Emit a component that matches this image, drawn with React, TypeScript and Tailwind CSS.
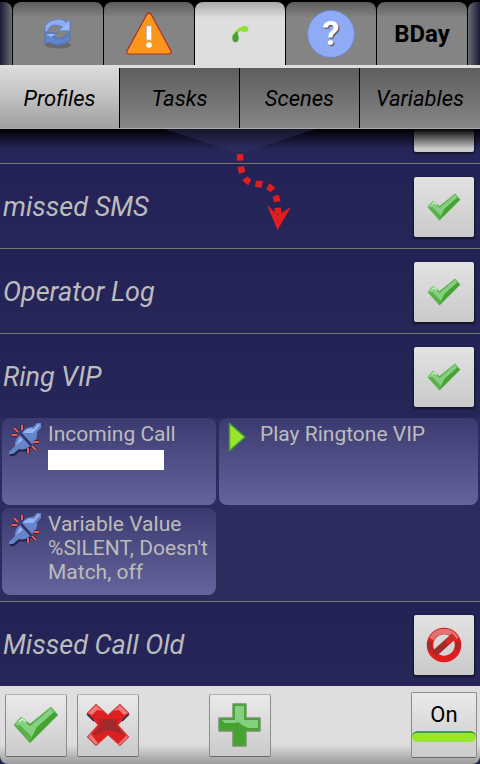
import type { ReactNode } from 'react';

const profiles = ['missed SMS', 'Operator Log', 'Ring VIP'];
const sections = ['Profiles', 'Tasks', 'Scenes', 'Variables'];

function CheckIcon({ className }: { className: string }) {
  return (
    <svg viewBox="0 0 46 38" className={className} aria-hidden="true">
      <path d="M1 19 L8 11 L17 18 L38 1 L45 9 L17 37 Z" fill="#46a330" stroke="#7fbf78" strokeWidth="1" strokeLinejoin="round" />
      <path d="M2 18 L8 12 L17 20 L38 2 L41 6 L24 21 L17 34 L12 27 Z" fill="#84cf80" />
      <path d="M2 20 L17 36 L18 30 L7 19 Z" fill="#5ab14a" />
      <path d="M6 16 L9 13 L13 16" fill="none" stroke="#d3f0cf" strokeWidth="1.5" />
    </svg>
  );
}

function CrossIcon() {
  return (
    <svg viewBox="0 0 44 44" className="size-11" aria-hidden="true">
      <path d="M1 10 L10 1 L22 12 L34 1 L43 10 L32 22 L43 34 L34 43 L22 32 L10 43 L1 34 L12 22 Z" fill="#df1f1f" stroke="#c76060" strokeWidth="1" strokeLinejoin="round" />
      <path d="M13 16 H32 L30 22 L38 32 Q31 30 27 28 H18 Q12 31 6 33 L15 22 Z" fill="#a32a2a" />
      <path d="M2 10 L10 2 L16 8 L11 7 L6 12 Z M28 8 L34 2 L42 10 L38 12 L33 7 Z" fill="#ef7777" />
      <path d="M2 34 L5 31 L12 40 L10 42 Z M32 41 L41 32 L42 34 L34 42 Z" fill="#e87a7a" />
      <path d="M1 11 L8 18 M43 11 L36 18" stroke="#1b1f38" strokeWidth="1.5" />
    </svg>
  );
}

function PlusIcon() {
  return (
    <svg viewBox="0 0 44 44" className="size-11" aria-hidden="true">
      <path d="M15 1 H28 V15 H42 V28 H28 V43 H15 V28 H1 V15 H15 Z" fill="#46a330" stroke="#75906f" strokeWidth="1.5" strokeLinejoin="round" />
      <path d="M17 3 H26 V17 H40 V25 H30 L24 22 Q21 18 17 20 H7 L4 17 H17 Z" fill="#84cf80" />
    </svg>
  );
}

function BlockedIcon() {
  return (
    <svg viewBox="0 0 36 36" className="size-9" aria-hidden="true">
      <circle cx="18" cy="18" r="14" fill="none" stroke="#de1d1d" strokeWidth="6.5" />
      <path d="M5.500 12 A14 14 0 0 1 30.500 12" fill="none" stroke="#e07474" strokeWidth="5" />
      <path d="M4 15 V23 M32 15 V23" stroke="#a52a2a" strokeWidth="4.5" />
      <path d="M8 27 L28 9" stroke="#a52a2a" strokeWidth="6.5" />
      <path d="M20 16 L28 9" stroke="#d42a2a" strokeWidth="5" />
    </svg>
  );
}

function RefreshIcon() {
  return (
    <svg viewBox="0 0 28 30" className="h-[30px] w-7" aria-hidden="true">
      <ellipse cx="14" cy="26" rx="13" ry="3.5" fill="#6a6a6c" />
      <path d="M1 13 V6 Q7 0 14 0 Q19 0 22 3 L26 0 V12 H15 L18 8 Q11 4 6 8 L3 13 Z" fill="#8fabf0" stroke="#5c7fc4" />
      <path d="M26 14 V21 Q20 26 14 26 Q9 26 5 23 L1 25 V14 H13 L9 18 Q16 21 21 18 L24 14 Z" fill="#5f84ce" stroke="#5372b4" />
      <path d="M2 15 H12 L7 18 Z M16 11 H25 V4 Z" fill="#9bb8fa" />
    </svg>
  );
}

function WarningIcon() {
  return (
    <svg viewBox="0 0 46 43" className="h-[43px] w-[46px]" aria-hidden="true">
      <path d="M21 2 Q23 0 25 2 L45 39 Q46 42 43 42 H3 Q0 42 1 39 Z" fill="#fa961c" stroke="#a53030" strokeWidth="1.2" />
      <rect x="20.5" y="14" width="5" height="14" fill="#fff" stroke="#b6b8cc" strokeWidth="0.8" />
      <circle cx="23" cy="33" r="2.8" fill="#fff" />
    </svg>
  );
}

function PhoneIcon() {
  return (
    <svg viewBox="0 0 18 18" className="size-[18px]" aria-hidden="true">
      <path d="M4 12 C4 8 7 4 13 3.500" fill="none" stroke="#8ee235" strokeWidth="3.5" />
      <path d="M5 11 Q5 9 6 7.500" fill="none" stroke="#46a330" strokeWidth="3" />
      <ellipse cx="4.500" cy="13" rx="3.200" ry="4.200" fill="#46a330" />
      <ellipse cx="13.500" cy="4" rx="4" ry="3" fill="#8ee235" />
    </svg>
  );
}

function PlugIcon() {
  return (
    <svg viewBox="0 0 34 34" className="size-[34px] shrink-0" aria-hidden="true">
      <path d="M2 31 L9 25 Q7 19 12 15 L23 26 Q18 31 12 29 L6 34 H2 Z" fill="#1e2347" />
      <path d="M1 30 L7 24 Q6 18 12 13 L22 24 Q17 29 11 27 L5 32 H1 Z" fill="#6585c8" />
      <path d="M14 11 Q18 4 25 5 L29 1 H33 V6 L29 10 Q30 17 24 22 Z" fill="#6585c8" />
      <path d="M8 23 L12 15 L15 18 Z M15 11 Q19 5 26 7 L30 2 L32 3 L25 11 Z" fill="#94b4f7" />
      <path d="M13 12 L24 24" stroke="#2b315f" strokeWidth="1.5" />
      <g stroke="#321d3b" strokeWidth="3.5">
        <path d="M6 6 L10 10 M14 3 V8 M4 13 H9 M26 20 H31 M20 26 V31 M24 24 L28 28" />
      </g>
      <g stroke="#e6605d" strokeWidth="2">
        <path d="M6 6 L10 10 M14 3 V8 M4 13 H9 M26 20 H31 M20 26 V31 M24 24 L28 28" />
      </g>
    </svg>
  );
}

function ProjectTab({ label, active, children }: { label: string; active?: boolean; children: ReactNode }) {
  return (
    <button
      aria-label={label}
      className={
        active
          ? 'flex h-[63px] flex-1 items-center justify-center rounded-t-lg bg-linear-to-b from-[#a9a9a9] via-[#dedede] via-25% to-[#dedede]'
          : 'flex h-[63px] flex-1 items-center justify-center rounded-t-lg bg-linear-to-b from-[#5c5c5c] via-[#848484] via-25% to-[#848484]'
      }
    >
      {children}
    </button>
  );
}

function ProfileRow({ name, children }: { name: string; children: ReactNode }) {
  return (
    <div className="flex h-[84px] shrink-0 items-center justify-between bg-linear-to-b from-[#232256] to-[#272659] pt-0.5 pr-1.5 pl-[3px]">
      <span className="text-[27px] leading-8 italic">{name}</span>
      <button
        aria-label={`Toggle ${name}`}
        className="flex size-[60px] items-center justify-center rounded-xs bg-linear-to-b from-[#e2e2e2] to-[#cacaca] shadow-[0_1px_2px_1px_#15152f]"
      >
        {children}
      </button>
    </div>
  );
}

function Card({ icon, children }: { icon: ReactNode; children: ReactNode }) {
  return (
    <div className="flex h-[87px] items-start rounded-lg bg-linear-to-b from-[#3b3a70] to-[#66649c] pt-1 text-[21px] leading-6">
      {icon}
      {children}
    </div>
  );
}

function BarButton({ label, children }: { label: string; children: ReactNode }) {
  return (
    <button
      aria-label={label}
      className="flex h-[63px] w-[62px] items-center justify-center rounded-xs border border-t-[#b0b0b0] border-r-[#8c8c8c] border-b-[#666] border-l-[#8c8c8c] bg-linear-to-b from-[#eaeaea] to-[#cbcbcb]"
    >
      {children}
    </button>
  );
}

export default function App() {
  return (
    <div className="flex min-h-screen flex-col bg-[#232256] font-[Roboto,sans-serif] text-[#bcbcbc]">
      <nav className="flex gap-px overflow-hidden border-b-[3px] border-[#dedede] bg-black pt-0.5 text-black">
        <div className="h-[63px] w-3 rounded-tr-lg bg-linear-to-r from-[#1b1b38] to-[#6e6e6e]" />
        <ProjectTab label="Sync"><RefreshIcon /></ProjectTab>
        <ProjectTab label="Alerts"><WarningIcon /></ProjectTab>
        <ProjectTab label="Calls" active><PhoneIcon /></ProjectTab>
        <ProjectTab label="Help">
          <span className="flex size-12 items-center justify-center rounded-full border border-[#7088c8] bg-[#90abf5] text-[34px] font-bold text-white [text-shadow:1px_1px_1px_#444]">?</span>
        </ProjectTab>
        <ProjectTab label="BDay"><span className="text-2xl font-bold">BDay</span></ProjectTab>
        <div className="h-[63px] w-3 rounded-tl-lg bg-linear-to-l from-[#1b1b38] to-[#6e6e6e]" />
      </nav>

      <nav className="grid h-[61px] grid-cols-4 border-b border-[#a8a8a8] text-[22px] text-black italic">
        {sections.map((section, index) => (
          <button
            key={section}
            className={
              index === 0
                ? 'border-r border-black bg-linear-to-b from-[#dadada] via-[#c6c6c6] via-40% to-[#a0a0a2]'
                : 'border-r border-black bg-linear-to-b from-[#5e5e5e] to-[#868688] last:border-r-0'
            }
          >
            {section}
          </button>
        ))}
      </nav>

      <main className="relative flex-1">
        {/* Row scrolled mostly out of view */}
        <div className="flex h-[35px] flex-col justify-end overflow-hidden border-b border-[#77776f]">
          <ProfileRow name="">{null}</ProfileRow>
        </div>

        {profiles.map((name) => (
          <div key={name} className="border-b border-[#77776f]">
            <ProfileRow name={name}><CheckIcon className="h-7 w-[34px]" /></ProfileRow>
            {name === 'Ring VIP' && (
              <div className="grid grid-cols-[214fr_259fr] gap-[3px] bg-[#2d2c5f] px-0.5 pb-1.5">
                <Card icon={<span className="w-[46px] shrink-0 pl-1.5"><PlugIcon /></span>}>
                  <div>
                    <p>Incoming Call</p>
                    <div className="mt-1 h-5 w-[116px] bg-white" />
                  </div>
                </Card>
                <Card
                  icon={
                    <svg viewBox="0 0 18 30" className="mr-3.5 ml-[9px] h-[30px] w-[18px] shrink-0" aria-hidden="true">
                      <path d="M1 1 L17 15 L1 29 Z" fill="#98e62d" />
                      <path d="M1.500 1 V29 M1 1 L17 15 L1 29" fill="none" stroke="#46a330" strokeWidth="1.5" />
                    </svg>
                  }
                >
                  <p>Play Ringtone VIP</p>
                </Card>
                <Card icon={<span className="w-[46px] shrink-0 pl-1.5"><PlugIcon /></span>}>
                  <p>
                    Variable Value
                    <br />
                    %SILENT, Doesn't
                    <br />
                    Match, off
                  </p>
                </Card>
              </div>
            )}
          </div>
        ))}
        <ProfileRow name="Missed Call Old"><BlockedIcon /></ProfileRow>

        {/* Shade under the tabs, with the pull-down handle and its trail */}
        <div className="pointer-events-none absolute inset-x-0 top-0 h-5 bg-linear-to-b from-black to-transparent" />
        <svg viewBox="0 0 160 104" className="pointer-events-none absolute top-0 left-1/2 h-[104px] w-40 -translate-x-1/2" aria-hidden="true">
          <path d="M4 0 H156 L88 22 Q80 25 72 22 Z" fill="#39386b" fillOpacity="0.4" />
          <path d="M80 25 C80 48 86 55 98 55 C112 56 118 62 118 86" fill="none" stroke="#df1f1f" strokeWidth="6.5" strokeDasharray="6.500 6" />
          <path d="M107 76 L118 86 L131 78 L117.500 101 Z" fill="#df1f1f" />
        </svg>
      </main>

      <footer className="grid h-[78px] grid-cols-[1fr_auto_1fr] items-center rounded-b-lg bg-linear-to-b from-[#dedede] from-75% to-[#9b9b9b]">
        <div className="flex gap-2.5 pl-[5px]">
          <BarButton label="Accept"><CheckIcon className="h-[38px] w-[46px]" /></BarButton>
          <BarButton label="Cancel"><CrossIcon /></BarButton>
        </div>
        <BarButton label="Add profile"><PlusIcon /></BarButton>
        <div className="flex justify-end pr-[3px]">
          <button className="flex h-[66px] w-[66px] flex-col items-center rounded-xs border border-[#8c8c8c] border-b-[#666] bg-linear-to-b from-[#eaeaea] to-[#cbcbcb] pt-2 text-[22px] leading-7 text-black">
            On
            <span className="mt-0.5 h-[11px] w-full rounded-md border-t-2 border-[#46a330] bg-[#98e62d]" />
          </button>
        </div>
      </footer>
    </div>
  );
}
